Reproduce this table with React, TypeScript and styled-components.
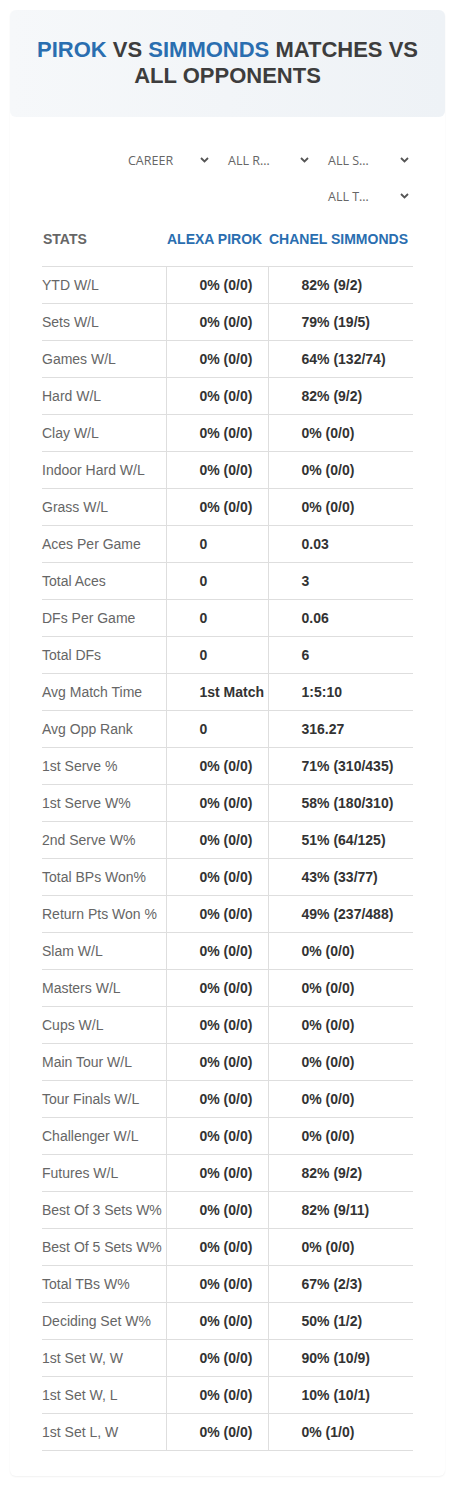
import React, { FC } from "react";
import styled, { createGlobalStyle } from "styled-components";

const Colors = {
  blue: "#2a6eb0",
  dark: "#3d3d3d",
  gray: "#666666",
  value: "#333333",
  line: "#dedede",
};

const GlobalStyle = createGlobalStyle`
  html, body {
    margin: 0;
    padding: 0;
    background: #ffffff;
    font-family: "Liberation Sans", Arial, sans-serif;
  }
`;

const Page = styled.div`
  padding: 10px 10px 10px;
`;

const Card = styled.div`
  background: #ffffff;
  border-radius: 6px;
  box-shadow: 0 1px 2px rgba(0, 0, 0, 0.06);
  padding-bottom: 25px;
`;

const Header = styled.div`
  background: linear-gradient(90deg, #f6f8fa 0%, #eef2f6 100%);
  border-radius: 6px;
  padding: 27px 24px 28px;
  text-align: center;
`;

const Title = styled.h1`
  margin: 0;
  font-size: 22px;
  line-height: 26px;
  font-weight: 700;
  color: ${Colors.dark};
  text-transform: uppercase;
`;

const Name = styled.span`
  color: ${Colors.blue};
`;

const Content = styled.div`
  padding: 25px 32px 0;
`;

const Filters = styled.div`
  display: flex;
  flex-wrap: wrap;
  justify-content: flex-end;
  margin-right: -5px;
`;

const Select = styled.div`
  width: 100px;
  height: 36px;
  box-sizing: border-box;
  display: flex;
  align-items: center;
  justify-content: space-between;
  padding: 0 9px 0 10px;
  font-family: "Open Sans", "Noto Sans", sans-serif;
  font-size: 12.5px;
  color: ${Colors.gray};
  text-transform: uppercase;
`;

const Chevron: FC = () => (
  <svg width="9" height="6" viewBox="0 0 9 6" fill="none">
    <path d="M1 1l3.5 3.5L8 1" stroke="#555" strokeWidth="1.8" />
  </svg>
);

const Table = styled.table`
  width: 100%;
  border-collapse: collapse;
  table-layout: fixed;
  margin-top: 4px;
`;

const HeadCell = styled.th<{ $blue?: boolean }>`
  text-align: left;
  font-size: 14px;
  font-weight: 700;
  text-transform: uppercase;
  padding: 13px 0 19px 1px;
  color: ${(p) => (p.$blue ? Colors.blue : Colors.gray)};
  white-space: nowrap;
`;

const Row = styled.tr`
  border-top: 1px solid ${Colors.line};
  border-bottom: 1px solid ${Colors.line};
`;

const Label = styled.td`
  height: 36px;
  padding: 0;
  font-size: 14px;
  color: ${Colors.gray};
  white-space: nowrap;
`;

const Value = styled.td`
  height: 36px;
  padding: 0 0 0 33px;
  font-size: 14px;
  font-weight: 700;
  color: ${Colors.value};
  border-left: 1px solid ${Colors.line};
  white-space: nowrap;
`;

const rows: [string, string, string][] = [
  ["YTD W/L", "0% (0/0)", "82% (9/2)"],
  ["Sets W/L", "0% (0/0)", "79% (19/5)"],
  ["Games W/L", "0% (0/0)", "64% (132/74)"],
  ["Hard W/L", "0% (0/0)", "82% (9/2)"],
  ["Clay W/L", "0% (0/0)", "0% (0/0)"],
  ["Indoor Hard W/L", "0% (0/0)", "0% (0/0)"],
  ["Grass W/L", "0% (0/0)", "0% (0/0)"],
  ["Aces Per Game", "0", "0.03"],
  ["Total Aces", "0", "3"],
  ["DFs Per Game", "0", "0.06"],
  ["Total DFs", "0", "6"],
  ["Avg Match Time", "1st Match", "1:5:10"],
  ["Avg Opp Rank", "0", "316.27"],
  ["1st Serve %", "0% (0/0)", "71% (310/435)"],
  ["1st Serve W%", "0% (0/0)", "58% (180/310)"],
  ["2nd Serve W%", "0% (0/0)", "51% (64/125)"],
  ["Total BPs Won%", "0% (0/0)", "43% (33/77)"],
  ["Return Pts Won %", "0% (0/0)", "49% (237/488)"],
  ["Slam W/L", "0% (0/0)", "0% (0/0)"],
  ["Masters W/L", "0% (0/0)", "0% (0/0)"],
  ["Cups W/L", "0% (0/0)", "0% (0/0)"],
  ["Main Tour W/L", "0% (0/0)", "0% (0/0)"],
  ["Tour Finals W/L", "0% (0/0)", "0% (0/0)"],
  ["Challenger W/L", "0% (0/0)", "0% (0/0)"],
  ["Futures W/L", "0% (0/0)", "82% (9/2)"],
  ["Best Of 3 Sets W%", "0% (0/0)", "82% (9/11)"],
  ["Best Of 5 Sets W%", "0% (0/0)", "0% (0/0)"],
  ["Total TBs W%", "0% (0/0)", "67% (2/3)"],
  ["Deciding Set W%", "0% (0/0)", "50% (1/2)"],
  ["1st Set W, W", "0% (0/0)", "90% (10/9)"],
  ["1st Set W, L", "0% (0/0)", "10% (10/1)"],
  ["1st Set L, W", "0% (0/0)", "0% (1/0)"],
];

const filters = ["Career", "All R…", "All S…", "All T…"];

export default function App() {
  return (
    <Page>
      <GlobalStyle />
      <Card>
        <Header>
          <Title>
            <Name>Pirok</Name> vs <Name>Simmonds</Name> matches vs all opponents
          </Title>
        </Header>
        <Content>
          <Filters>
            {filters.map((f) => (
              <Select key={f}>
                <span>{f}</span>
                <Chevron />
              </Select>
            ))}
          </Filters>
          <Table>
            <colgroup>
              <col style={{ width: 124 }} />
              <col style={{ width: 102 }} />
              <col />
            </colgroup>
            <thead>
              <tr>
                <HeadCell>Stats</HeadCell>
                <HeadCell $blue>Alexa Pirok</HeadCell>
                <HeadCell $blue>Chanel Simmonds</HeadCell>
              </tr>
            </thead>
            <tbody>
              {rows.map(([label, a, b]) => (
                <Row key={label}>
                  <Label>{label}</Label>
                  <Value>{a}</Value>
                  <Value>{b}</Value>
                </Row>
              ))}
            </tbody>
          </Table>
        </Content>
      </Card>
    </Page>
  );
}
